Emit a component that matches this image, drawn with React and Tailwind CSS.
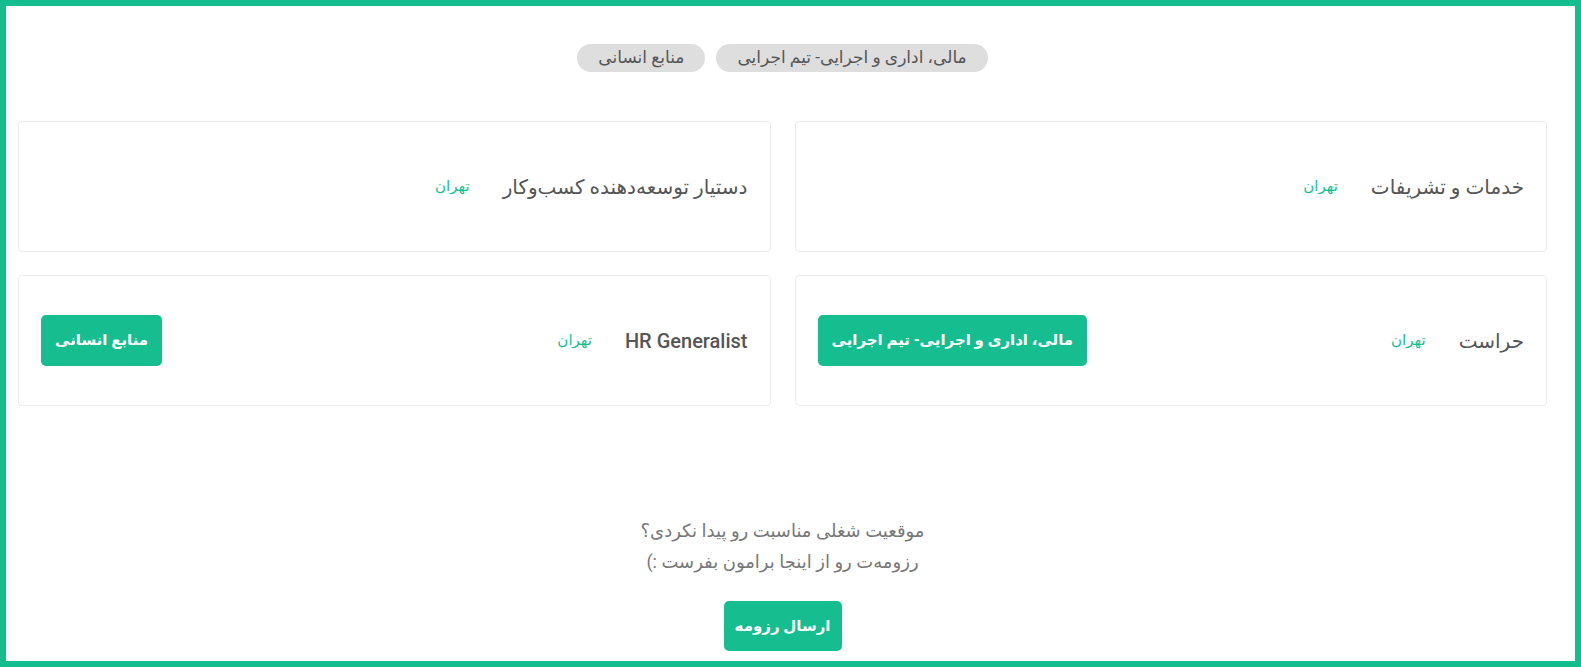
import React from "react";

const jobs = [
  { title: "خدمات و تشریفات", city: "تهران" },
  { title: "دستیار توسعه‌دهنده کسب‌وکار", city: "تهران" },
  { title: "حراست", city: "تهران", tag: "مالی، اداری و اجرایی- تیم اجرایی" },
  { title: "HR Generalist", city: "تهران", tag: "منابع انسانی" },
];

const chips = ["مالی، اداری و اجرایی- تیم اجرایی", "منابع انسانی"];

const JobCard = ({ job }) => (
  <div className="h-[131px] flex items-center px-[22px] border border-[#ebebeb] rounded-[4px] bg-white">
    <span className="text-[20px] font-medium text-[#555555]">{job.title}</span>
    <span className="mr-[33px] text-[15px] text-[#17bf8f]">{job.city}</span>
    {job.tag && (
      <button className="mr-auto h-[51px] px-[14px] rounded-[5px] bg-[#15bd8f] text-white text-[15px] font-bold">
        {job.tag}
      </button>
    )}
  </div>
);

const App = () => {
  return (
    <div
      dir="rtl"
      className="h-[667px] overflow-hidden border-[6px] border-[#14bd8e] bg-white"
      style={{ fontFamily: "Roboto, 'DejaVu Sans', sans-serif" }}
    >
      <div className="pl-[12px] pr-[28px] pt-[38px]">
        {/* filter chips */}
        <div className="flex justify-center gap-[11px]">
          {chips.map((c) => (
            <span
              key={c}
              className="h-[28px] px-[21px] flex items-center rounded-full bg-[#dedede] text-[17px] text-[#555555]"
            >
              {c}
            </span>
          ))}
        </div>

        {/* jobs */}
        <div className="grid grid-cols-2 gap-x-[24px] gap-y-[23px] mt-[49px]">
          {jobs.map((job) => (
            <JobCard key={job.title} job={job} />
          ))}
        </div>

        {/* bottom */}
        <div className="mt-[109px] flex flex-col items-center text-[18px] text-[#777777] leading-[31px]">
          <p>موقعیت شغلی مناسبت رو پیدا نکردی؟</p>
          <p>رزومه‌ت رو از اینجا برامون بفرست :)</p>
          <button className="mt-[24px] h-[50px] w-[118px] rounded-[5px] bg-[#15bd8f] text-white text-[15px] font-bold">
            ارسال رزومه
          </button>
        </div>
      </div>
    </div>
  );
};

export default App;
